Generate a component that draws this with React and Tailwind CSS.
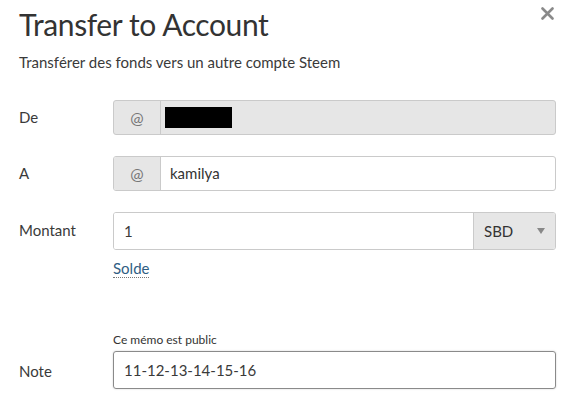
import React from "react";

export default function App() {
  return (
    <div className="w-[570px] h-[401px] bg-white relative overflow-hidden text-[#3a3a3a]" style={{ fontFamily: "Lato, 'Open Sans', sans-serif" }}>
      <button className="absolute left-[540px] top-[6px] w-[14px] h-[14px] flex items-center justify-center">
        <svg width="13" height="13" viewBox="0 0 13 13">
          <path d="M1.5 1.5 L11.5 11.5 M11.5 1.5 L1.5 11.5" stroke="#8a8a8a" strokeWidth="2.6" strokeLinecap="round" />
        </svg>
      </button>
      <div className="pl-[19px] pr-[14px]">
        <h1 className="pt-[6px] text-[30px] leading-[36px] text-[#333] tracking-[-0.4px]">Transfer to Account</h1>
        <p className="mt-[11px] text-[15px] leading-[18px] text-[#3a3a3a]">Transférer des fonds vers un autre compte Steem</p>

        <div className="mt-[29px] flex items-center h-[35px]">
          <div className="w-[94px] text-[15px]">De</div>
          <div className="flex-1 flex h-[35px] border border-[#cacaca] rounded-[3px] bg-[#e6e6e6] overflow-hidden">
            <div className="w-[47px] flex items-center justify-center border-r border-[#cacaca] text-[16px] text-[#777]">@</div>
            <div className="flex items-center pl-[4px]">
              <div className="w-[67px] h-[21px] bg-black"></div>
            </div>
          </div>
        </div>

        <div className="mt-[21px] flex items-center h-[35px]">
          <div className="w-[94px] text-[15px]">A</div>
          <div className="flex-1 flex h-[35px] border border-[#cacaca] rounded-[3px] bg-white overflow-hidden">
            <div className="w-[47px] flex items-center justify-center border-r border-[#cacaca] bg-[#e6e6e6] text-[16px] text-[#777]">@</div>
            <div className="flex items-center pl-[9px] text-[15px] text-[#333]">kamilya</div>
          </div>
        </div>

        <div className="mt-[21px] flex items-start">
          <div className="w-[94px] text-[15px] pt-[7px]">Montant</div>
          <div className="flex-1">
            <div className="flex h-[38px] border border-[#cacaca] rounded-[3px] overflow-hidden">
              <div className="flex-1 flex items-center pl-[10px] text-[15px] bg-white">1</div>
              <div className="w-[82px] flex items-center justify-between pl-[10px] pr-[10px] bg-[#e6e6e6] border-l border-[#cacaca] text-[15px] text-[#333]">
                <span>SBD</span>
                <svg width="8" height="6" viewBox="0 0 8 6"><path d="M0 0 L8 0 L4 6 Z" fill="#888" /></svg>
              </div>
            </div>
            <div className="mt-[9px] text-[15px] leading-[18px] text-[#2f5d83]">
              <span className="border-b border-dotted border-[#777]">Solde</span>
            </div>
          </div>
        </div>

        <div className="mt-[55px] flex items-end">
          <div className="w-[94px] text-[15px] pb-[7px]">Note</div>
          <div className="flex-1">
            <div className="text-[12px] leading-[15px] text-[#333] mb-[4px]">Ce mémo est public</div>
            <div className="h-[38px] border border-[#8a8a8a] rounded-[3px] flex items-center pl-[10px] text-[15px] shadow-[0_0_2px_rgba(0,0,0,0.2)]">11-12-13-14-15-16</div>
          </div>
        </div>
      </div>
    </div>
  );
}
